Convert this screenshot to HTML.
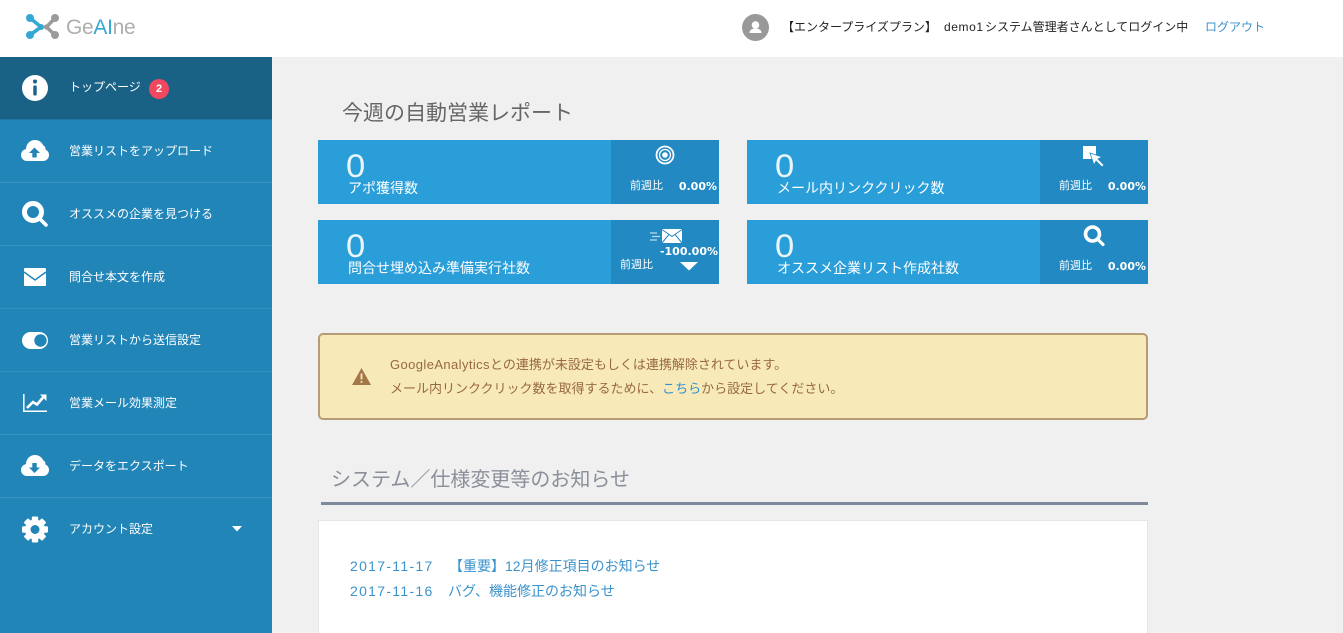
<!DOCTYPE html>
<html lang="ja"><head><meta charset="utf-8"><title>GeAIne</title>
<style>
*{box-sizing:border-box}
html,body{margin:0;padding:0;width:1343px;height:633px;overflow:hidden;background:#f0f0f0;font-family:"Liberation Sans","Noto Sans CJK JP",sans-serif}
.a{position:absolute;white-space:nowrap}
#top{position:absolute;left:0;top:0;width:1343px;height:57px;background:#fff}
#side{position:absolute;left:0;top:57px;width:272px;height:576px;background:#2185b8}
.item{position:absolute;left:0;width:272px;height:63px;border-bottom:1px solid #3792c1}
.item .t{position:absolute;left:69px;top:23px;font-size:12px;line-height:16px;color:#fff;white-space:nowrap}
.item svg{position:absolute;left:20px;top:16px}
.card{position:absolute;width:401px;height:64px;background:#299ed9;color:#fff}
.card .side{position:absolute;left:293px;top:0;width:108px;height:64px;background:#2289c2}
.card .n{position:absolute;left:28px;top:8px;font-size:32px;line-height:36px;font-weight:normal;transform:scaleX(1.08);transform-origin:left center;color:#eaf6fc}
.card .l{position:absolute;left:30px;top:38px;font-size:14px;line-height:20px;white-space:nowrap}
.w{position:absolute;left:19px;top:39px;font-size:11px;line-height:15px;white-space:nowrap}
.p{position:absolute;right:2px;top:39px;font:bold 11px/15px "DejaVu Sans","Liberation Sans",sans-serif;white-space:nowrap}
a{color:#3b93cc;text-decoration:none}
</style></head><body>
<div id="top">
<svg class="a" style="left:26px;top:14px" width="34" height="26" viewBox="0 0 34 26">
<path d="M4 4L15 13L4 21" stroke="#35a7d4" stroke-width="3.600" fill="none"/>
<circle cx="4" cy="4" r="4" fill="#35a7d4"/><circle cx="4" cy="21" r="4" fill="#35a7d4"/><circle cx="15" cy="13" r="3" fill="#35a7d4"/>
<path d="M29 4L20.500 13L29 21" stroke="#9b9b9b" stroke-width="3.600" fill="none"/>
<circle cx="29" cy="4" r="4" fill="#9b9b9b"/><circle cx="29" cy="21" r="4" fill="#9b9b9b"/><circle cx="20.500" cy="13" r="2.600" fill="#9b9b9b"/>
</svg>
<div class="a" style="left:66px;top:15px;font-size:21px;line-height:26px;color:#aeaeae;letter-spacing:-.3px">Ge<span style="color:#35a7d4">AI</span>ne</div>
<svg class="a" style="left:742px;top:14px" width="27" height="27" viewBox="0 0 27 27"><circle cx="13.500" cy="13.500" r="13.500" fill="#999"/><circle cx="13.500" cy="11" r="3.800" fill="#fff"/><path d="M7.500 19c0-3.500 3-4.500 6-4.500s6 1 6 4.500z" fill="#fff"/></svg>
<div class="a" style="left:782px;top:18px;font-size:12px;line-height:18px;color:#222">【エンタープライズプラン】</div>
<div class="a" style="left:944px;top:18px;font-size:12px;line-height:18px;color:#222;letter-spacing:.6px">demo1</div>
<div class="a" style="left:985px;top:18px;font-size:12px;line-height:18px;color:#222">システム管理者さんとしてログイン中</div>
<div class="a" style="left:1205px;top:18px;font-size:12px;line-height:18px"><a href="#">ログアウト</a></div>
</div>

<div id="side">
<div class="item" style="top:0;background:#1a6186;border-bottom-color:#1f76a3">
<svg width="30" height="30" viewBox="0 0 30 30"><circle cx="15" cy="15" r="13" fill="#fff"/><rect x="13.300" y="12.500" width="3.400" height="10" rx="1" fill="#1a6186"/><circle cx="15" cy="8.500" r="2" fill="#1a6186"/></svg>
<div class="t" style="top:22px">トップページ</div>
<div class="a" style="left:149px;top:22px;width:20px;height:20px;border-radius:50%;background:#f1485f;color:#fff;font-size:11px;font-weight:bold;line-height:20px;text-align:center">2</div>
</div>
<div class="item" style="top:63px">
<svg width="30" height="30" viewBox="0 0 30 30"><g fill="#fff"><circle cx="15" cy="13" r="9"/><circle cx="7" cy="19" r="6"/><circle cx="23" cy="19" r="6"/><circle cx="21.500" cy="13" r="4"/><rect x="7" y="15" width="16" height="10"/></g><path d="M14.500 11.500l5.500 5.500h-3.300v4.500h-4.400V17H9z" fill="#2185b8"/></svg>
<div class="t">営業リストをアップロード</div></div>
<div class="item" style="top:126px">
<svg width="30" height="30" viewBox="0 0 30 30"><circle cx="13" cy="13" r="8.500" fill="none" stroke="#fff" stroke-width="5"/><path d="M20 20l6 6" stroke="#fff" stroke-width="3.600" stroke-linecap="round"/></svg>
<div class="t">オススメの企業を見つける</div></div>
<div class="item" style="top:189px">
<svg width="30" height="30" viewBox="0 0 30 30"><rect x="4" y="6" width="22" height="18" rx="1" fill="#fff"/><path d="M4 10l11 8 11-8" fill="none" stroke="#2185b8" stroke-width="1.500"/></svg>
<div class="t">問合せ本文を作成</div></div>
<div class="item" style="top:252px">
<svg width="30" height="30" viewBox="0 0 30 30"><rect x="2" y="7" width="26" height="17" rx="8.500" fill="#fff"/><circle cx="20.500" cy="15.500" r="6.200" fill="#2185b8"/></svg>
<div class="t">営業リストから送信設定</div></div>
<div class="item" style="top:315px">
<svg width="30" height="30" viewBox="0 0 30 30"><path d="M3.800 6v17.200H27" fill="none" stroke="#fff" stroke-width="1.500"/><path d="M7 20l6-6 4 2.500 6-7" fill="none" stroke="#fff" stroke-width="2.600"/><path d="M20 6.500h6.500V13z" fill="#fff"/></svg>
<div class="t">営業メール効果測定</div></div>
<div class="item" style="top:378px">
<svg width="30" height="30" viewBox="0 0 30 30"><g fill="#fff"><circle cx="15" cy="13" r="9"/><circle cx="7" cy="19" r="6"/><circle cx="23" cy="19" r="6"/><circle cx="21.500" cy="13" r="4"/><rect x="7" y="15" width="16" height="10"/></g><path d="M14.500 22l5.500-5.500h-3.300V12h-4.400v4.500H9z" fill="#2185b8"/></svg>
<div class="t">データをエクスポート</div></div>
<div class="item" style="top:441px;border:0">
<svg width="30" height="30" viewBox="0 0 30 30"><g fill="#fff"><circle cx="15" cy="15.500" r="10"/><rect x="11.800" y="2.500" width="6.400" height="26" rx="1.200"/><rect x="11.800" y="2.500" width="6.400" height="26" rx="1.200" transform="rotate(45 15 15.500)"/><rect x="11.800" y="2.500" width="6.400" height="26" rx="1.200" transform="rotate(90 15 15.500)"/><rect x="11.800" y="2.500" width="6.400" height="26" rx="1.200" transform="rotate(135 15 15.500)"/></g><circle cx="15" cy="15.500" r="4.500" fill="#2185b8"/></svg>
<div class="t">アカウント設定</div>
<svg style="left:232px;top:28px" width="10" height="6" viewBox="0 0 10 6"><path d="M0 0h10L5 5.500z" fill="#fff"/></svg>
</div>
</div>

<div class="a" style="left:342px;top:99px;font-size:21px;line-height:30px;color:#666">今週の自動営業レポート</div>

<div class="card" style="left:318px;top:140px"><div class="n">0</div><div class="l">アポ獲得数</div>
<div class="side"><div class="w">前週比</div><div class="p">0.00%</div>
<svg class="a" style="left:44px;top:5px" width="20" height="20" viewBox="0 0 20 20"><g fill="none" stroke="#fff"><circle cx="10" cy="10" r="8.500" stroke-width="1.800"/><circle cx="10" cy="10" r="5.500" stroke-width="1.300"/></g><circle cx="10" cy="10" r="2.800" fill="#fff"/></svg>
</div></div>
<div class="card" style="left:747px;top:140px"><div class="n">0</div><div class="l">メール内リンククリック数</div>
<div class="side"><div class="w">前週比</div><div class="p">0.00%</div>
<svg class="a" style="left:42px;top:5px" width="24" height="24" viewBox="0 0 24 24"><rect x="1" y="1" width="13" height="13" fill="#fff"/><path d="M8 8l12 4-4 2 6 6-2 2-6-6-2 4z" fill="#fff" stroke="#2289c2" stroke-width=".8"/></svg>
</div></div>
<div class="card" style="left:318px;top:220px"><div class="n">0</div><div class="l">問合せ埋め込み準備実行社数</div>
<div class="side"><div class="w" style="left:9px;top:38px">前週比</div><div class="p" style="top:24px;right:1px">-100.00%</div>
<svg class="a" style="left:38px;top:7px" width="34" height="18" viewBox="0 0 34 18"><path d="M1 6h7M3 9.500h8M1 13h7" stroke="#b9dcf0" stroke-width="1.200"/><rect x="13" y="2" width="20" height="14" fill="#fff"/><path d="M13 2.500l10 7 10-7M13 16l7-8.500M33 16l-7-8.500" fill="none" stroke="#2289c2" stroke-width="1"/></svg>
<svg class="a" style="left:69px;top:42px" width="18" height="9" viewBox="0 0 18 9"><path d="M0 0h18L9 8.500z" fill="#fff"/></svg>
</div></div>
<div class="card" style="left:747px;top:220px"><div class="n">0</div><div class="l">オススメ企業リスト作成社数</div>
<div class="side"><div class="w">前週比</div><div class="p">0.00%</div>
<svg class="a" style="left:42px;top:4px" width="24" height="24" viewBox="0 0 24 24"><circle cx="10.500" cy="10" r="7" fill="none" stroke="#fff" stroke-width="3.600"/><path d="M16 15.500l5 5" stroke="#fff" stroke-width="3.200" stroke-linecap="round"/></svg>
</div></div>

<div class="a" style="left:318px;top:333px;width:830px;height:87px;background:#f8eab8;border:2px solid #b59c75;border-radius:5px"></div>
<svg class="a" style="left:352px;top:368px" width="19" height="17" viewBox="0 0 19 17"><path d="M9.500 0L19 17H0z" fill="#a47748"/><rect x="8.600" y="5.500" width="1.800" height="6" fill="#f8eab8"/><rect x="8.600" y="13" width="1.800" height="1.800" fill="#f8eab8"/></svg>
<div class="a" style="left:390px;top:356px;font-size:13px;line-height:18px;color:#97693f"><span style="letter-spacing:.4px">GoogleAnalytics</span>との連携が未設定もしくは連携解除されています。</div>
<div class="a" style="left:390px;top:380px;font-size:13px;line-height:18px;color:#97693f">メール内リンククリック数を取得するために、<a href="#" style="color:#2f8fd0">こちら</a>から設定してください。</div>

<div class="a" style="left:331px;top:465px;font-size:20px;line-height:30px;color:#8a8f99">システム／仕様変更等のお知らせ</div>
<div class="a" style="left:321px;top:502px;width:827px;height:3px;background:#7e899d"></div>
<div class="a" style="left:318px;top:520px;width:830px;height:113px;background:#fff;border:1px solid #e6e6e6;border-bottom:0"></div>
<div class="a" style="left:350px;top:556px;font-size:14px;line-height:20px;letter-spacing:1.3px"><a href="#">2017-11-17</a></div>
<div class="a" style="left:449px;top:556px;font-size:14px;line-height:20px"><a href="#">【重要】12月修正項目のお知らせ</a></div>
<div class="a" style="left:350px;top:581px;font-size:14px;line-height:20px;letter-spacing:1.3px"><a href="#">2017-11-16</a></div>
<div class="a" style="left:448px;top:581px;font-size:14px;line-height:20px"><a href="#">バグ、機能修正のお知らせ</a></div>
</body></html>
